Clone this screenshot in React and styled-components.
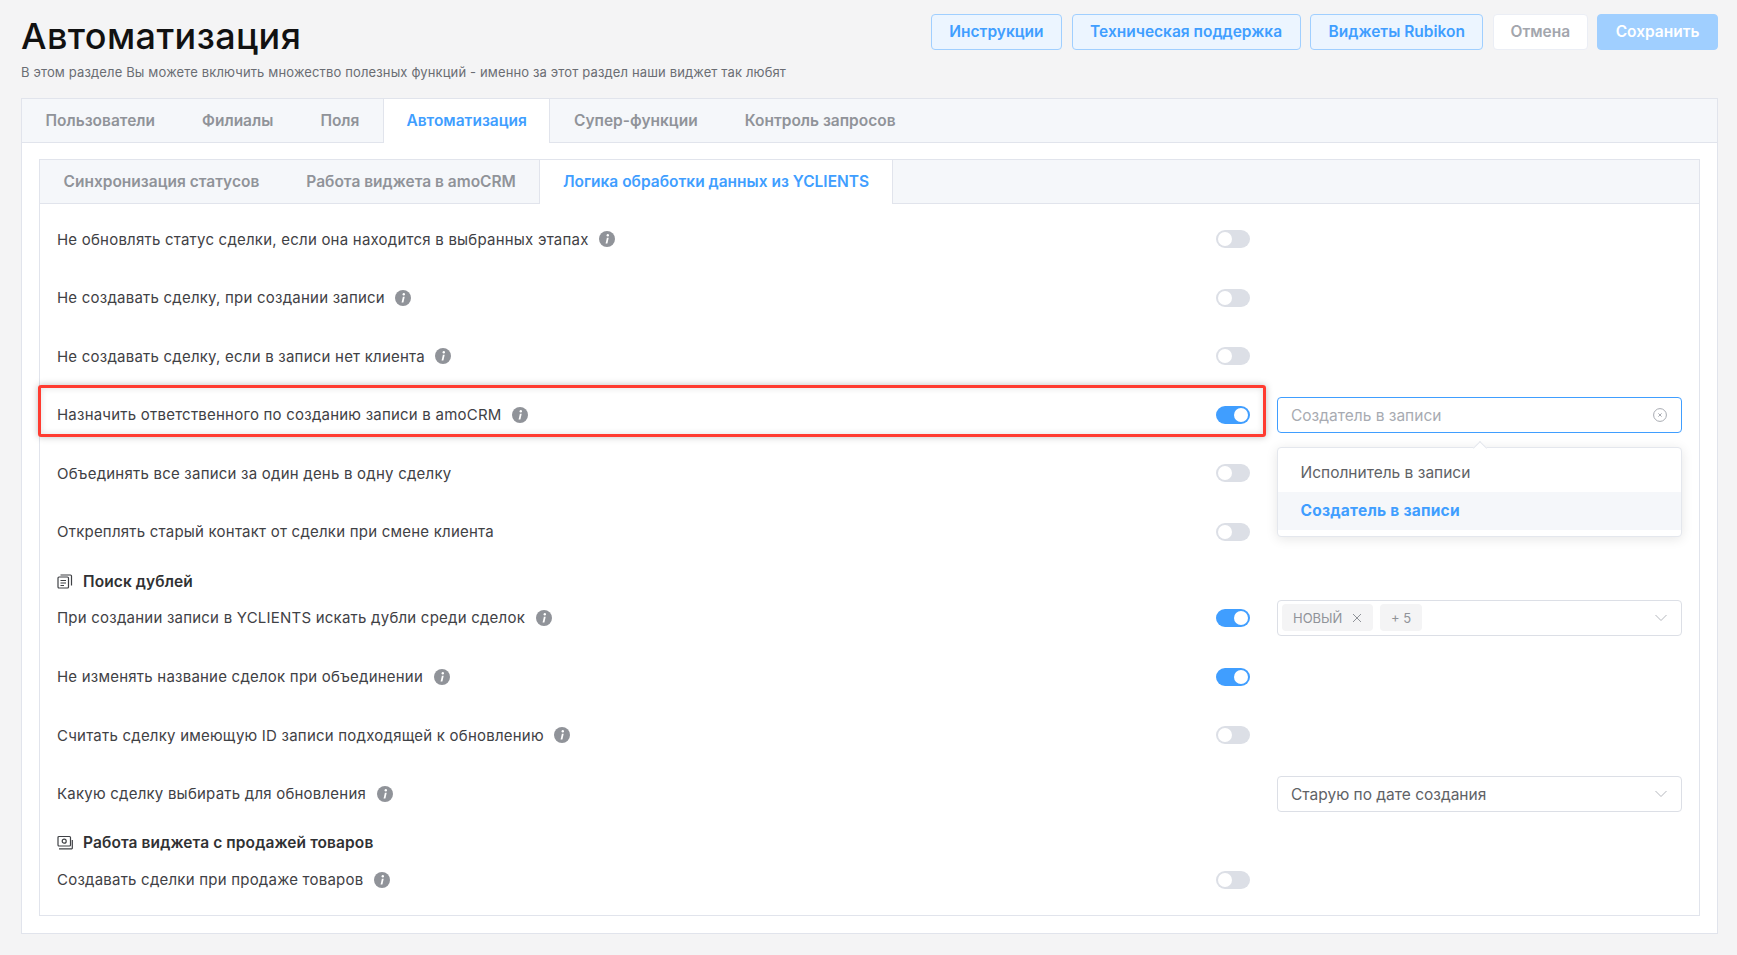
import React from 'react';
import styled, { createGlobalStyle } from 'styled-components';

const Global = createGlobalStyle`
  * { box-sizing: border-box; }
  html, body { margin: 0; padding: 0; background: #f4f4f5; }
  body { font-family: "Inter", "Liberation Sans", sans-serif; }
`;

const Page = styled.div`
  width: 1737px;
  height: 955px;
  padding: 14px 19px 0 21px;
  overflow: hidden;
`;
const Header = styled.header`
  display: flex;
  justify-content: space-between;
  height: 84px;
`;
const Title = styled.h1`
  margin: 0;
  padding-top: 1px;
  font-size: 36px;
  line-height: 42px;
  font-weight: 500;
  letter-spacing: 0.4px;
  color: #111;
`;
const Subtitle = styled.p`
  margin: 6px 0 0;
  font-size: 13px;
  line-height: 18px;
  letter-spacing: 0.14px;
  color: #6a6d73;
`;
const Actions = styled.div`
  display: flex;
  gap: 9.5px;
  align-items: flex-start;
`;
const Button = styled.button`
  height: 36px;
  padding: 0 ${p => (p.$kind === 'cancel' ? '16.5px' : '17.5px')} 1px;
  border-radius: 4px;
  font: 600 15.5px "Inter", sans-serif;
  border: 1px solid ${p => (p.$kind === 'cancel' ? '#ebeef5' : '#a0cfff')};
  background: ${p => (p.$kind === 'plain' ? '#ecf5ff' : p.$kind === 'cancel' ? '#fff' : '#a0cfff')};
  color: ${p => (p.$kind === 'plain' ? '#409eff' : p.$kind === 'cancel' ? '#a3a6ad' : '#fff')};
`;
const Card = styled.section`
  background: #fff;
  border: 1px solid #e1e4ec;
  height: 836px;
`;
const TabBar = styled.div`
  display: flex;
  height: 44px;
  background: #f5f7fa;
  border-bottom: 1px solid #e1e4ec;
`;
const Tab = styled.div`
  display: flex;
  align-items: center;
  padding: 0 22.5px 2px;
  margin-bottom: -1px;
  height: 44px;
  font-size: 15.5px;
  font-weight: 600;
  color: ${p => (p.$active ? '#409eff' : '#909399')};
  background: ${p => (p.$active ? '#fff' : 'transparent')};
  border-left: 1px solid ${p => (p.$active ? '#e1e4ec' : 'transparent')};
  border-right: 1px solid ${p => (p.$active ? '#e1e4ec' : 'transparent')};
`;
const InnerCard = styled.div`
  margin: 16px 17px 0 17px;
  height: 757px;
  border: 1px solid #e1e4ec;
`;
const Rows = styled.div`
  padding: 17px 17px 0 17px;
`;
const Row = styled.div`
  display: grid;
  grid-template-columns: 1132px 34px 405px;
  column-gap: 27px;
  align-items: center;
  height: 36px;
  margin-bottom: 22.6px;
`;
const LabelWrap = styled.div`
  display: flex;
  align-items: center;
  gap: 10.5px;
  font-size: 15px;
  letter-spacing: 0.22px;
  color: #3f4145;
`;
const Heading = styled.div`
  display: flex;
  align-items: center;
  gap: 10px;
  height: 17px;
  margin-bottom: 10.4px;
  font-size: 15.5px;
  font-weight: 600;
  letter-spacing: 0.1px;
  color: #303133;
`;
const Track = styled.div`
  position: relative;
  width: 34px;
  height: 18px;
  border-radius: 9px;
  background: ${p => (p.$on ? '#409eff' : '#dcdfe6')};
`;
const Knob = styled.span`
  position: absolute;
  top: 2px;
  left: ${p => (p.$on ? '18px' : '2px')};
  width: 14px;
  height: 14px;
  border-radius: 50%;
  background: #fff;
`;
const Field = styled.div`
  position: relative;
  display: flex;
  align-items: center;
  justify-content: space-between;
  height: 36px;
  padding: 0 14px 0 ${p => (p.$tags ? '4px' : '13px')};
  border: 1px solid ${p => (p.$focus ? '#409eff' : '#dcdfe6')};
  border-radius: 4px;
  background: #fff;
  font-size: 15.5px;
  color: ${p => (p.$placeholder ? '#a8abb2' : '#606266')};
`;
const FieldText = styled.span`
  padding-top: 2px;
`;
const Tags = styled.div`
  display: flex;
  gap: 6.5px;
`;
const TagChip = styled.span`
  display: inline-flex;
  align-items: center;
  gap: 10px;
  height: 27px;
  padding: 0 11px;
  border-radius: 4px;
  background: #f4f4f5;
  font-size: 13px;
  color: #909399;
`;
const Dropdown = styled.div`
  position: absolute;
  left: -1px;
  right: -1px;
  top: 49px;
  z-index: 3;
  padding: 6px 0;
  background: #fff;
  border: 1px solid #e4e7ed;
  border-radius: 4px;
  box-shadow: 0 2px 12px rgba(0, 0, 0, 0.1);
  &::before {
    content: '';
    position: absolute;
    top: -5px;
    left: 197px;
    width: 9px;
    height: 9px;
    background: #fff;
    border-left: 1px solid #e4e7ed;
    border-top: 1px solid #e4e7ed;
    transform: rotate(45deg);
  }
`;
const Option = styled.div`
  height: 38px;
  padding: 0 22.5px;
  display: flex;
  align-items: center;
  font-size: 15.5px;
  font-weight: ${p => (p.$selected ? 700 : 400)};
  letter-spacing: ${p => (p.$selected ? '0.25px' : '0')};
  color: ${p => (p.$selected ? '#409eff' : '#606266')};
  background: ${p => (p.$selected ? '#f5f7fa' : 'transparent')};
`;
const Highlight = styled.div`
  position: absolute;
  left: 38px;
  top: 385px;
  width: 1228px;
  height: 52px;
  border: 3px solid #ff3b30;
  border-radius: 3px;
  box-shadow: 0 0 7px rgba(0, 0, 0, 0.25), inset 0 0 7px rgba(0, 0, 0, 0.12);
  pointer-events: none;
`;
const Empty = styled.div``;

const Info = () => (
  <svg width="16" height="16" viewBox="0 0 16 16">
    <circle cx="8" cy="8" r="8" fill="#909399" />
    <circle cx="8.8" cy="4.2" r="1.2" fill="#fff" />
    <path d="M7.9 6.7 L6.6 12.6 H8.4 L9.7 6.7 Z" fill="#fff" />
  </svg>
);
const Chevron = () => (
  <svg width="12" height="8" viewBox="0 0 12 8" fill="none" stroke="#b4b7bd" strokeWidth="1">
    <path d="M0.5 1 L6 6.5 L11.5 1" />
  </svg>
);
const ClearIcon = () => (
  <svg width="14" height="14" viewBox="0 0 14 14" fill="none" stroke="#a8abb2" strokeWidth="1">
    <circle cx="7" cy="7" r="6.4" />
    <path d="M5.4 5.4 L8.6 8.6 M8.6 5.4 L5.4 8.6" />
  </svg>
);
const CloseIcon = () => (
  <svg width="10" height="10" viewBox="0 0 10 10" fill="none" stroke="#909399" strokeWidth="1">
    <path d="M1 1 L9 9 M9 1 L1 9" />
  </svg>
);
const CopyIcon = () => (
  <svg width="16" height="16" viewBox="0 0 16 16" fill="none" stroke="#3f4145" strokeWidth="1.2">
    <rect x="1" y="4" width="10.5" height="11" rx="1" />
    <path d="M3.5 2 H13.5 a1 1 0 0 1 1 1 V12.5 M3.5 7.5 H9 M3.5 10 H9 M3.5 12.5 H7" />
  </svg>
);
const MoneyIcon = () => (
  <svg width="16" height="16" viewBox="0 0 16 16" fill="none" stroke="#3f4145" strokeWidth="1.2">
    <rect x="1" y="1.5" width="12.5" height="9.5" rx="1" />
    <circle cx="7.2" cy="6.2" r="2" />
    <path d="M2 13.8 H14.8 a0.5 0.5 0 0 0 0.5 -0.5 V5" />
  </svg>
);

const Label = ({ children, info }) => (
  <LabelWrap>
    <span>{children}</span>
    {info && <Info />}
  </LabelWrap>
);
const Toggle = ({ on }) => (
  <Track $on={on}>
    <Knob $on={on} />
  </Track>
);

export default function App() {
  return (
    <Page>
      <Global />
      <Header>
        <div>
          <Title>Автоматизация</Title>
          <Subtitle>В этом разделе Вы можете включить множество полезных функций - именно за этот раздел наши виджет так любят</Subtitle>
        </div>
        <Actions>
          <Button $kind="plain">Инструкции</Button>
          <Button $kind="plain">Техническая поддержка</Button>
          <Button $kind="plain">Виджеты Rubikon</Button>
          <Button $kind="cancel">Отмена</Button>
          <Button $kind="save">Сохранить</Button>
        </Actions>
      </Header>
      <Card>
        <TabBar>
          <Tab>Пользователи</Tab>
          <Tab>Филиалы</Tab>
          <Tab>Поля</Tab>
          <Tab $active>Автоматизация</Tab>
          <Tab>Супер-функции</Tab>
          <Tab>Контроль запросов</Tab>
        </TabBar>
        <InnerCard>
          <TabBar>
            <Tab>Синхронизация статусов</Tab>
            <Tab>Работа виджета в amoCRM</Tab>
            <Tab $active>Логика обработки данных из YCLIENTS</Tab>
          </TabBar>
          <Rows>
            <Row><Label info>Не обновлять статус сделки, если она находится в выбранных этапах</Label><Toggle /><Empty /></Row>
            <Row><Label info>Не создавать сделку, при создании записи</Label><Toggle /><Empty /></Row>
            <Row><Label info>Не создавать сделку, если в записи нет клиента</Label><Toggle /><Empty /></Row>
            <Row>
              <Label info>Назначить ответственного по созданию записи в amoCRM</Label>
              <Toggle on />
              <Field $focus $placeholder>
                <FieldText>Создатель в записи</FieldText>
                <ClearIcon />
                <Dropdown>
                  <Option>Исполнитель в записи</Option>
                  <Option $selected>Создатель в записи</Option>
                </Dropdown>
              </Field>
            </Row>
            <Row><Label>Объединять все записи за один день в одну сделку</Label><Toggle /><Empty /></Row>
            <Row><Label>Откреплять старый контакт от сделки при смене клиента</Label><Toggle /><Empty /></Row>
            <Heading><CopyIcon />Поиск дублей</Heading>
            <Row>
              <Label info>При создании записи в YCLIENTS искать дубли среди сделок</Label>
              <Toggle on />
              <Field $tags>
                <Tags>
                  <TagChip>НОВЫЙ <CloseIcon /></TagChip>
                  <TagChip>+ 5</TagChip>
                </Tags>
                <Chevron />
              </Field>
            </Row>
            <Row><Label info>Не изменять название сделок при объединении</Label><Toggle on /><Empty /></Row>
            <Row><Label info>Считать сделку имеющую ID записи подходящей к обновлению</Label><Toggle /><Empty /></Row>
            <Row>
              <Label info>Какую сделку выбирать для обновления</Label>
              <Empty />
              <Field><FieldText>Старую по дате создания</FieldText><Chevron /></Field>
            </Row>
            <Heading><MoneyIcon />Работа виджета с продажей товаров</Heading>
            <Row><Label info>Создавать сделки при продаже товаров</Label><Toggle /><Empty /></Row>
          </Rows>
        </InnerCard>
      </Card>
      <Highlight />
    </Page>
  );
}
